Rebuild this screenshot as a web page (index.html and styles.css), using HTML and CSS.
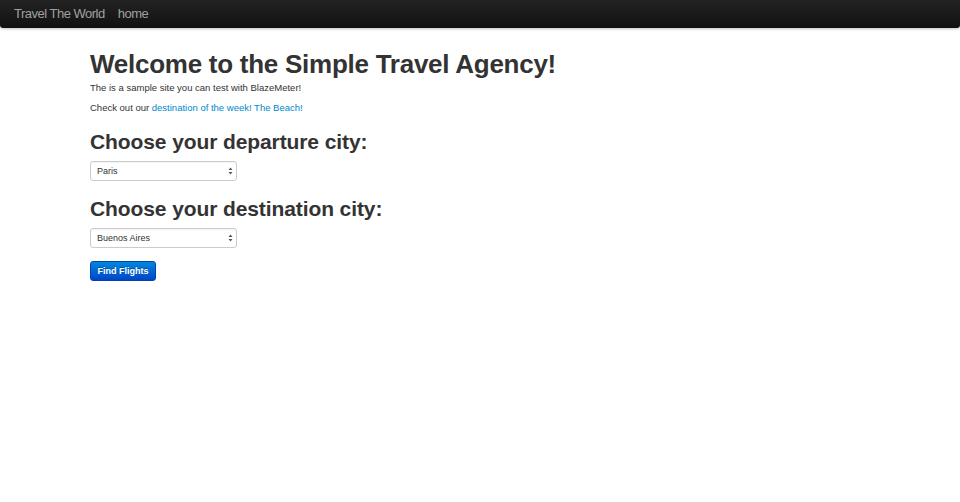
FILE: index.html
```html
<!DOCTYPE html>
<html>
<head>
<meta charset="utf-8">
<link rel="stylesheet" href="styles.css">
</head>
<body>
<div class="navbar">
  <a class="brand" href="#">Travel The World</a>
  <a class="nav-link" href="#">home</a>
</div>
<div class="container">
  <h1>Welcome to the Simple Travel Agency!</h1>
  <p>The is a sample site you can test with BlazeMeter!</p>
  <p>Check out our <a href="#">destination of the week! The Beach!</a></p>
  <form>
    <h2 class="first">Choose your departure city:</h2>
    <div class="select"><span>Paris</span><svg width="5" height="8" viewBox="0 0 5 8"><path d="M2.5 0.5 L4.5 3 H0.5 Z M2.5 7.5 L4.5 5 H0.5 Z" fill="#555"/></svg></div>
    <h2>Choose your destination city:</h2>
    <div class="select"><span>Buenos Aires</span><svg width="5" height="8" viewBox="0 0 5 8"><path d="M2.5 0.5 L4.5 3 H0.5 Z M2.5 7.5 L4.5 5 H0.5 Z" fill="#555"/></svg></div>
    <div class="actions"><button type="button" class="btn">Find Flights</button></div>
  </form>
</div>
</body>
</html>
```
FILE: styles.css
```css
html, body { margin: 0; padding: 0; background: #fff; }
body {
  font-family: "Liberation Sans", Arial, sans-serif;
  font-size: 9.5px;
  line-height: 14px;
  color: #333;
}
.navbar {
  height: 28px;
  display: flex;
  align-items: center;
  background: linear-gradient(to bottom, #232323, #111111);
  border-radius: 0 0 3px 3px;
  box-shadow: 0 1px 3px rgba(0,0,0,0.25);
  padding-left: 14px;
  gap: 13px;
}
.navbar a {
  color: #a0a0a0;
  text-decoration: none;
  font-size: 13px;
  letter-spacing: -0.5px;
}
.container {
  padding: 14px 0 0 90px;
}
h1 {
  font-size: 26px;
  line-height: 28px;
  margin: 8px 0 3px;
  font-weight: bold;
  letter-spacing: -0.26px;
}
p { margin: 0 0 6px; }
a { color: #0088cc; text-decoration: none; }
h2 {
  font-size: 21px;
  line-height: 28px;
  margin: 14px 0 5px;
  font-weight: bold;
  letter-spacing: -0.1px;
}
h2.first { margin-top: 13px; }
.select {
  width: 147px;
  height: 20px;
  box-sizing: border-box;
  border: 1px solid #ccc;
  border-radius: 3px;
  display: flex;
  align-items: center;
  justify-content: space-between;
  padding: 0 3px 0 6px;
  font-size: 9px;
  color: #333;
  margin-bottom: 9px;
  box-shadow: inset 0 1px 1px rgba(0,0,0,0.05);
}
.actions { padding-top: 4px; }
.btn {
  width: 66px;
  height: 20px;
  border: 1px solid #0044aa;
  border-radius: 3px;
  background: linear-gradient(to bottom, #0088dd, #0045c8);
  color: #fff;
  font-family: "Liberation Sans", Arial, sans-serif;
  font-size: 9px;
  font-weight: bold;
  padding: 0;
  text-shadow: 0 -1px 0 rgba(0,0,0,0.25);
}
```
